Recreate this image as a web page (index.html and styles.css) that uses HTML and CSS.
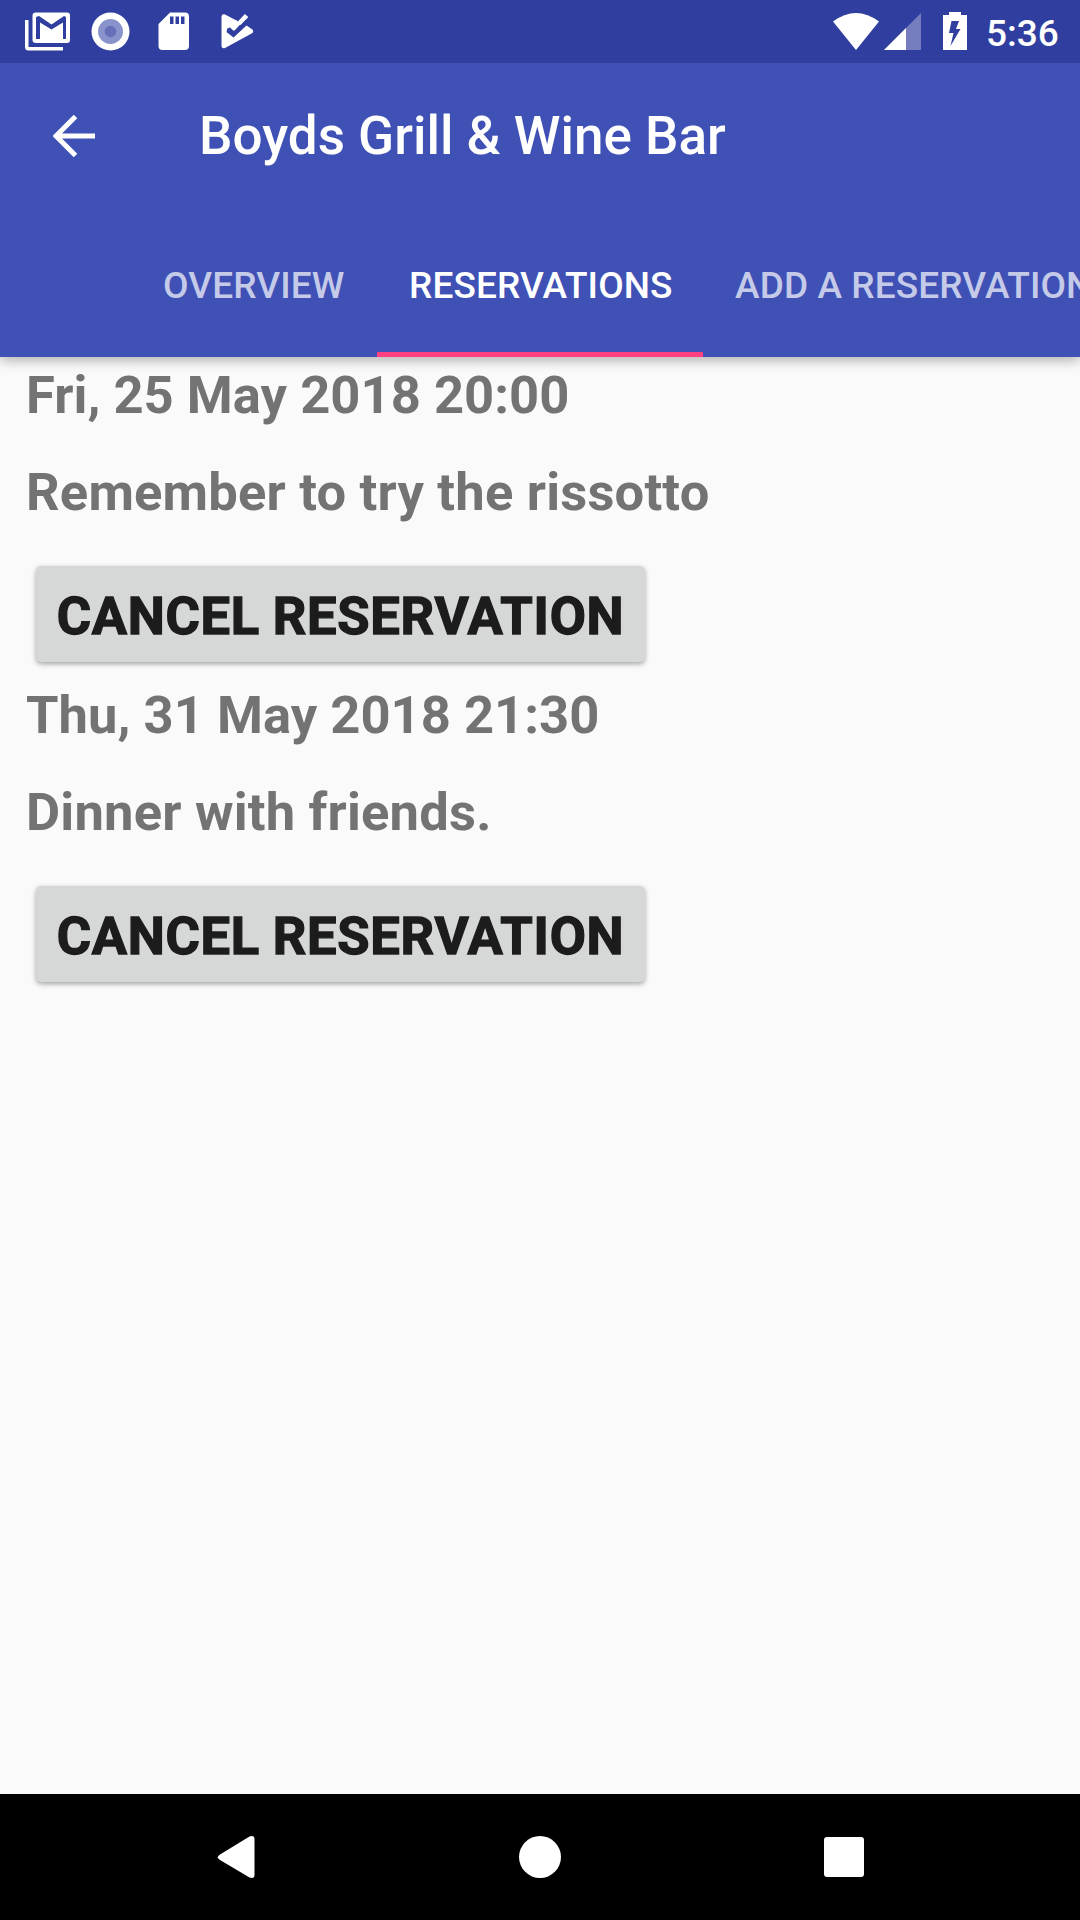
FILE: index.html
```html
<!DOCTYPE html>
<html lang="en">
<head>
<meta charset="utf-8">
<title>Boyds Grill &amp; Wine Bar</title>
<link rel="stylesheet" href="styles.css">
</head>
<body>
<div class="screen">
  <header class="status-bar">
    <svg class="status-icons" width="280" height="63" viewBox="0 0 280 63" fill="#fff" aria-hidden="true">
      <path d="M25 20h3.500v27h34.500v3.500H28.500q-3.500 0-3.500-3.500z"/>
      <path fill-rule="evenodd" d="M36 12.500h31q3 0 3 3V40q0 3-3 3H36q-3.500 0-3.500-3V15.500q0-3 3.500-3zM36 17v22h4V22.500l11.500 7 11.500-7V39h3V17l-2-1-12.500 8.500L39 16z"/>
      <circle cx="110.500" cy="31.500" r="19"/>
      <circle cx="110.500" cy="31.500" r="12.500" fill="#8a92cb"/>
      <circle cx="110.500" cy="31.500" r="5.800" fill="#6570b8"/>
      <path fill-rule="evenodd" d="M170 12.500h15q4 0 4 4V46q0 4-4 4h-22.500q-4 0-4-4V24zM170 16.500V24h3.500v-7.500zM175.500 16.500V24h3.500v-7.500zM181 16.500V24h3.500v-7.500z"/>
      <path d="M225 14.500L237.500 21l-4.500 9.500-5.500-2.500-1 4 7 5.500L246.500 25.500l6 4q1.500 1.800 0 3.500L225 48q-3.500 1-3.500-2.500v-28q0-4 3.500-3z"/>
      <path d="M246.500 16L233.500 30.500" stroke="#fff" stroke-width="3.800"/>
      <path d="M238 22L233 27" stroke="#fff" stroke-width="5"/>
      <path d="M228.500 28.500L233.800 34L246.500 20.500" fill="none" stroke="#303f9f" stroke-width="3.800"/>
      <path d="M246.500 15.500L239 23.500" stroke="#fff" stroke-width="4.500"/>
    </svg>
    <div class="status-right">
      <svg width="150" height="63" viewBox="820 0 150 63" fill="#fff" aria-hidden="true">
        <path d="M833 21.500Q856 4.500 879 21.500L856 50z"/>
        <path d="M921 13v37h-37z" fill="#767dbe"/>
        <path d="M906 28v22h-22z"/>
        <path fill-rule="evenodd" d="M949 12h12v3h6v35h-24V15h6zM951.500 21l-2.500 12h4.500l-3 13L960.500 29h-4.500l3-8z"/>
      </svg>
      <span class="clock">5:36</span>
    </div>
  </header>
  <div class="app-bar">
    <div class="toolbar">
      <svg class="back" width="42" height="42" viewBox="0 0 42 42" aria-hidden="true"><path d="M42 21H3.500M22.500 1.500L3 21L22.500 40.500" fill="none" stroke="#fff" stroke-width="5"/></svg>
      <h1 class="title">Boyds Grill &amp; Wine Bar</h1>
    </div>
    <nav class="tabs">
      <a class="tab overview">OVERVIEW</a>
      <a class="tab active">RESERVATIONS</a>
      <a class="tab">ADD A RESERVATION</a>
    </nav>
  </div>
  <main class="list">
    <section class="reservation">
      <p class="line">Fri, 25 May 2018 20:00</p>
      <p class="line note">Remember to try the rissotto</p>
      <button class="cancel">CANCEL RESERVATION</button>
    </section>
    <section class="reservation">
      <p class="line">Thu, 31 May 2018 21:30</p>
      <p class="line note">Dinner with friends.</p>
      <button class="cancel">CANCEL RESERVATION</button>
    </section>
  </main>
  <footer class="nav-bar">
    <svg width="42" height="44" viewBox="0 0 42 44" fill="#fff" aria-hidden="true"><path d="M4 19.500L33.500 1.500q5-1.500 5 2.500V40q0 4-5 2.500L4 25q-4.500-2.700 0-5.500z"/></svg>
    <svg width="42" height="42" viewBox="0 0 42 42" fill="#fff" aria-hidden="true"><circle cx="21" cy="21" r="21"/></svg>
    <svg width="42" height="40" viewBox="0 0 42 40" fill="#fff" aria-hidden="true"><rect x="2" width="40" height="40" rx="3"/></svg>
  </footer>
</div>
</body>
</html>
```
FILE: styles.css
```css
* { box-sizing: border-box; }
body { margin: 0; font-family: Roboto, sans-serif; background: #fafafa; }
h1, p { margin: 0; }
.screen {
  width: 1080px;
  height: 1920px;
  display: flex;
  flex-direction: column;
  overflow: hidden;
}
.status-bar {
  height: 63px;
  flex: none;
  z-index: 2;
  display: flex;
  justify-content: space-between;
  background: #303f9f;
}
.status-right { display: flex; padding-right: 22px; }
.clock {
  width: 88px;
  padding-left: 16px;
  line-height: 67px;
  font-size: 37px;
  font-weight: 500;
  color: #fff;
  white-space: nowrap;
}
.app-bar {
  height: 294px;
  flex: none;
  z-index: 1;
  background: #3f51b5;
  box-shadow: 0 4px 11px rgba(0, 0, 0, 0.28);
}
.toolbar {
  height: 147px;
  display: flex;
  align-items: center;
  padding: 0 0 1px 53px;
}
.title {
  margin: 0 0 1px 104px;
  font-size: 53px;
  line-height: 62px;
  font-weight: 500;
  color: #fff;
}
.tabs {
  height: 147px;
  display: flex;
  padding-left: 131px;
  overflow: hidden;
}
.tab {
  flex: none;
  padding: 0 0 0 32px;
  line-height: 151px;
  font-size: 37px;
  font-weight: 500;
  letter-spacing: 0.1px;
  color: #c5cae9;
  white-space: nowrap;
}
.tab.overview { width: 246px; }
.tab.active { width: 326px; color: #fff; box-shadow: inset 0 -5px #ff4081; }
.list {
  flex: 1;
  padding: 7px 26px 0;
}
.reservation {
  display: flex;
  flex-direction: column;
  align-items: flex-start;
  height: 320px;
}
.line {
  margin-bottom: 35px;
  font-size: 52.5px;
  line-height: 62px;
  font-weight: 700;
  letter-spacing: 0.04px;
  color: #737373;
  white-space: nowrap;
}
.note { letter-spacing: 0.2px; }
.cancel {
  width: 609px;
  height: 96px;
  margin: 8px 0 0 10px;
  padding: 3px 0 0;
  border: 0;
  border-radius: 5px;
  background: #d6d8d7;
  box-shadow: 0 2px 5px rgba(0, 0, 0, 0.35);
  font: 700 52.5px/62px Roboto, sans-serif;
  letter-spacing: 0.72px;
  word-spacing: -1px;
  -webkit-text-stroke: 1.3px #1c1c1c;
  color: #1c1c1c;
  white-space: nowrap;
}
.nav-bar {
  height: 126px;
  flex: none;
  display: flex;
  align-items: center;
  justify-content: space-between;
  padding: 0 216px;
  background: #000;
}
```
